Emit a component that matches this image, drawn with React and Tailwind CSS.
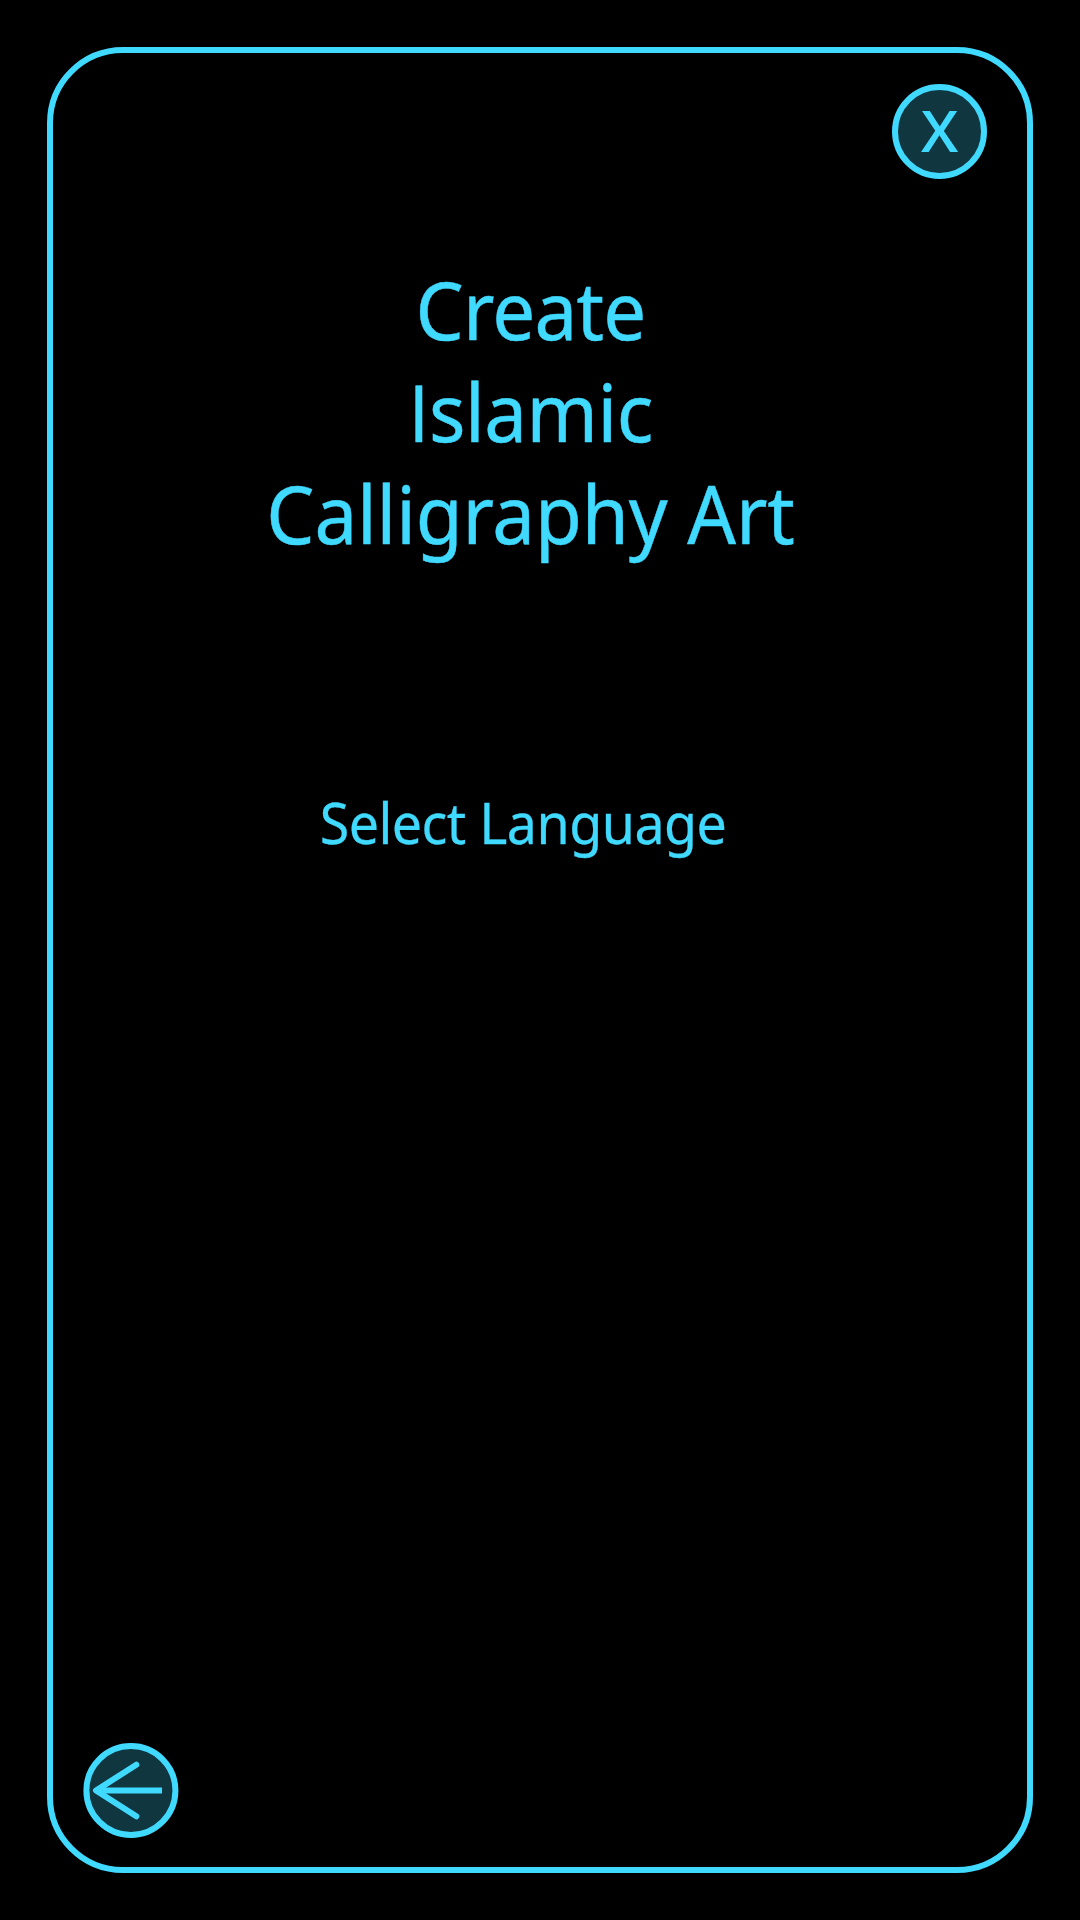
export default function App() {
  return (
    <main className="flex h-[1920px] w-[1080px] bg-black p-[47px] font-['Noto_Sans',sans-serif] text-[#40d9ff]">
      <section className="flex w-full flex-col rounded-[76px] border-[6px] border-[#40d9ff]">
        <header className="flex justify-end pt-[31px] pr-10">
          <button
            aria-label="Close"
            className="flex h-[95px] w-[95px] items-center justify-center rounded-full border-[6px] border-[#40d9ff] bg-[#10363f] pb-[2px] font-['Open_Sans',sans-serif] text-[57px] leading-none font-semibold"
          >
            <span className="scale-x-105">X</span>
          </button>
        </header>
        <h1 className="mt-[79px] mr-[19px] scale-x-96 text-center text-[79.5px] leading-[102px] [-webkit-text-stroke:0.5px_#40d9ff]">
          <span className="block tracking-[-0.8px]">Create</span>
          <span className="block tracking-[-0.5px]">
            <span className="font-['Open_Sans',sans-serif]">I</span>slamic
          </span>
          <span className="block tracking-[-0.15px]">Calligraphy Art</span>
        </h1>
        <p className="mt-[223px] mr-[34px] scale-x-96 text-center text-[56px] leading-[70px] tracking-[-0.55px] [-webkit-text-stroke:0.3px_#40d9ff]">
          Select Language
        </p>
        <footer className="mt-auto pb-[29px] pl-[30px]">
          <button aria-label="Back" className="block h-[95px] w-[96px]">
            <svg viewBox="0 0 96 95" className="h-full w-full" fill="none" stroke="currentColor" strokeWidth="6">
              <circle cx="47.9" cy="47.5" r="44.5" fill="#10363f" />
              <path d="M79 47.5H13" />
              <path d="M53.3 21.7L13 47.5L53.3 73.3" strokeLinecap="round" strokeLinejoin="round" />
            </svg>
          </button>
        </footer>
      </section>
    </main>
  );
}
